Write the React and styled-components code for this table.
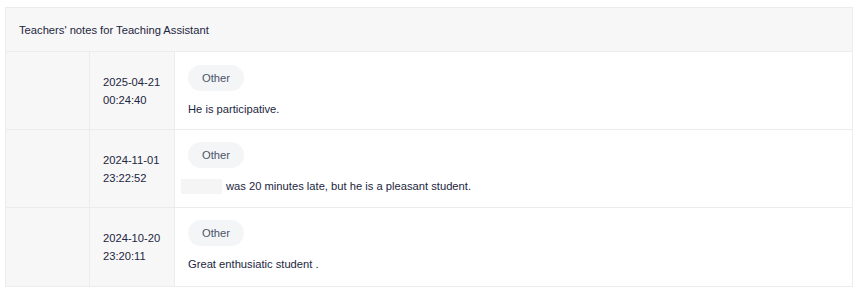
import React from "react";
import styled, { createGlobalStyle } from "styled-components";

const Global = createGlobalStyle`
  html, body { margin: 0; padding: 0; background: #ffffff; }
  body {
    font-family: "Liberation Sans", Helvetica, Arial, sans-serif;
    font-size: 11.2px;
    color: #1c2640;
  }
  * { box-sizing: border-box; }
`;

const Card = styled.section`
  margin: 7px 6px 0 5px;
  border: 1px solid #ececec;
  background: #ffffff;
`;

const Header = styled.header`
  height: 44px;
  padding: 0 13px;
  display: flex;
  align-items: center;
  background: #f7f7f7;
  border-bottom: 1px solid #ececec;
  color: #1c2640;
`;

const Row = styled.div`
  display: grid;
  grid-template-columns: 84px 85px 1fr;
  height: 78px;
  border-bottom: ${(p) => (p.$last ? "none" : "1px solid #ececec")};
`;

const SideCell = styled.div`
  background: #f7f7f7;
  border-right: 1px solid #ececec;
`;

const DateCell = styled.div`
  background: #f7f7f7;
  border-right: 1px solid #ececec;
  display: flex;
  flex-direction: column;
  justify-content: center;
  padding: 0 13px;
  line-height: 18px;
  color: #1c2640;
`;

const NoteCell = styled.div`
  padding: ${(p) => p.$top}px 13px 0 13px;
  display: flex;
  flex-direction: column;
  align-items: flex-start;
`;

const Tag = styled.span`
  display: inline-flex;
  align-items: center;
  height: 26px;
  padding: 0 14px;
  border-radius: 13px;
  background: #f4f5f6;
  color: #4a5468;
  margin-bottom: 9px;
`;

const Text = styled.p`
  margin: 0;
  line-height: 19px;
  color: #1c2640;
`;

const Redacted = styled.span`
  display: inline-block;
  width: 41px;
  height: 15px;
  margin-left: -7px;
  margin-right: 4px;
  vertical-align: -4px;
  background: #f5f5f6;
`;

const notes = [
  { date: "2025-04-21", time: "00:24:40", text: "He is participative.", top: 13 },
  { date: "2024-11-01", time: "23:22:52", text: "was 20 minutes late, but he is a pleasant student.", redacted: true, top: 12 },
  { date: "2024-10-20", time: "23:20:11", text: "Great enthusiatic student .", top: 12 },
];

export default function App() {
  return (
    <>
      <Global />
      <Card>
        <Header>Teachers' notes for Teaching Assistant</Header>
        {notes.map((n, i) => (
          <Row key={n.date} $last={i === notes.length - 1}>
            <SideCell />
            <DateCell>
              <span>{n.date}</span>
              <span>{n.time}</span>
            </DateCell>
            <NoteCell $top={n.top}>
              <Tag>Other</Tag>
              <Text>
                {n.redacted && <Redacted />}
                {n.text}
              </Text>
            </NoteCell>
          </Row>
        ))}
      </Card>
    </>
  );
}
